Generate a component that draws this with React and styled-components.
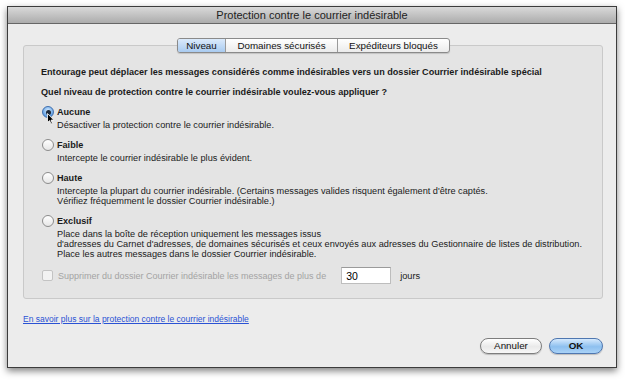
import React from "react";
import styled, { createGlobalStyle } from "styled-components";

const GlobalStyle = createGlobalStyle`
  html, body {
    margin: 0;
    background: #ffffff;
  }
  body {
    font-family: "Liberation Sans", Arial, sans-serif;
    color: #1a1a1a;
  }
  * {
    box-sizing: border-box;
  }
`;

const options = [
  {
    id: "aucune",
    label: "Aucune",
    lines: ["Désactiver la protection contre le courrier indésirable."],
    checked: true,
  },
  {
    id: "faible",
    label: "Faible",
    lines: ["Intercepte le courrier indésirable le plus évident."],
  },
  {
    id: "haute",
    label: "Haute",
    lines: [
      "Intercepte la plupart du courrier indésirable.  (Certains messages valides risquent également d'être captés.",
      "Vérifiez fréquemment le dossier Courrier indésirable.)",
    ],
  },
  {
    id: "exclusif",
    label: "Exclusif",
    lines: [
      "Place dans la boîte de réception uniquement les messages issus",
      "d'adresses du Carnet d'adresses, de domaines sécurisés et ceux envoyés aux adresses du Gestionnaire de listes de distribution.",
      "Place les autres messages dans le dossier Courrier indésirable.",
    ],
  },
];

const tabs = [
  { label: "Niveau", width: 47, active: true },
  { label: "Domaines sécurisés", width: 112 },
  { label: "Expéditeurs bloqués", width: 112 },
];

const App = () => {
  return (
    <Page>
      <GlobalStyle />
      <Window>
        <TitleBar>Protection contre le courrier indésirable</TitleBar>
        <Body>
          <TabBar>
            <Segmented>
              {tabs.map((t) => (
                <Segment key={t.label} $active={t.active} $width={t.width}>
                  {t.label}
                </Segment>
              ))}
            </Segmented>
          </TabBar>
          <Group>
            <Intro>
              Entourage peut déplacer les messages considérés comme indésirables
              vers un dossier Courrier indésirable spécial
            </Intro>
            <Question>
              Quel niveau de protection contre le courrier indésirable
              voulez-vous appliquer ?
            </Question>
            <OptionList>
              {options.map((o) => (
                <Option key={o.id}>
                  <Radio $checked={o.checked}>
                    {o.checked && <Dot />}
                    {o.checked && (
                      <Pointer viewBox="0 0 8 12" width="8" height="12">
                        <path
                          d="M0.5 0.5 L0.5 9.5 L2.6 7.6 L4 11 L5.4 10.4 L4 7.1 L6.8 7.1 Z"
                          fill="#000"
                          stroke="#fff"
                          strokeWidth="0.8"
                        />
                      </Pointer>
                    )}
                  </Radio>
                  <OptionLabel>{o.label}</OptionLabel>
                  <OptionDesc>
                    {o.lines.map((l) => (
                      <div key={l}>{l}</div>
                    ))}
                  </OptionDesc>
                </Option>
              ))}
            </OptionList>
            <DeleteRow>
              <Checkbox />
              <DisabledLabel>
                Supprimer du dossier Courrier indésirable les messages de plus de
              </DisabledLabel>
              <DaysInput defaultValue="30" />
              <Unit>jours</Unit>
            </DeleteRow>
          </Group>
          <HelpLink href="#">
            En savoir plus sur la protection contre le courrier indésirable
          </HelpLink>
          <Buttons>
            <Button>Annuler</Button>
            <Button $primary>OK</Button>
          </Buttons>
        </Body>
      </Window>
    </Page>
  );
};

export default App;

const Page = styled.div`
  width: 625px;
  height: 380px;
  padding: 6px 8px 0 7px;
`;

const Window = styled.div`
  width: 610px;
  height: 362px;
  border: 1px solid #3c3c3c;
  background: #ececec;
  box-shadow: 0 3px 7px rgba(0, 0, 0, 0.5);
  display: flex;
  flex-direction: column;
`;

const TitleBar = styled.div`
  height: 17px;
  flex-shrink: 0;
  background: linear-gradient(#d9d9d9, #acacac);
  border-bottom: 1px solid #666;
  font-size: 11px;
  line-height: 16px;
  text-align: center;
  color: #222;
`;

const Body = styled.div`
  flex: 1;
  display: flex;
  flex-direction: column;
  padding: 14px 13px 0 15px;
`;

const TabBar = styled.div`
  display: flex;
  justify-content: center;
  margin-left: 1px;
  margin-bottom: -8px;
  position: relative;
  z-index: 1;
`;

const Segmented = styled.div`
  display: flex;
  height: 15px;
  border: 1px solid #8a8a8a;
  border-radius: 3px;
  overflow: hidden;
  background: linear-gradient(#ffffff, #ebebeb);
  box-shadow: 0 1px 1px rgba(0, 0, 0, 0.15);
`;

const Segment = styled.div`
  width: ${(p) => p.$width}px;
  font-size: 9.8px;
  line-height: 13px;
  text-align: center;
  color: #111;
  border-left: 1px solid #9a9a9a;
  background: ${(p) =>
    p.$active ? "linear-gradient(#dbeafb, #a9cbf0)" : "transparent"};
  &:first-child {
    border-left: none;
  }
`;

const Group = styled.div`
  border: 1px solid #c9c9c9;
  border-radius: 3px;
  background: #e4e4e4;
  padding: 20px 16px 14px 17px;
`;

const Intro = styled.div`
  font-size: 9.1px;
  font-weight: bold;
  line-height: 12px;
  white-space: nowrap;
`;

const Question = styled(Intro)`
  margin-top: 8px;
`;

const OptionList = styled.div`
  margin-top: 8px;
  display: flex;
  flex-direction: column;
  gap: 9px;
`;

const Option = styled.div`
  display: grid;
  grid-template-columns: 12px 1fr;
  column-gap: 3px;
  padding-left: 1px;
`;

const Radio = styled.span`
  position: relative;
  width: 12px;
  height: 12px;
  border-radius: 50%;
  border: 1px solid ${(p) => (p.$checked ? "#3f6fae" : "#8c8c8c")};
  background: ${(p) =>
    p.$checked
      ? "radial-gradient(circle at 50% 35%, #d7ecff, #5f9ee3 70%)"
      : "linear-gradient(#ffffff, #e6e6e6)"};
  display: flex;
  align-items: center;
  justify-content: center;
`;

const Dot = styled.span`
  width: 5px;
  height: 5px;
  border-radius: 50%;
  background: #1d2a3a;
`;

const Pointer = styled.svg`
  position: absolute;
  left: 4px;
  top: 6px;
`;

const OptionLabel = styled.span`
  font-size: 9.1px;
  font-weight: bold;
  line-height: 12px;
`;

const OptionDesc = styled.div`
  grid-column: 2;
  margin-top: 2px;
  font-size: 9.2px;
  line-height: 10px;
  white-space: nowrap;
`;

const DeleteRow = styled.div`
  margin-top: 8px;
  display: flex;
  align-items: center;
  height: 17px;
  padding-left: 1px;
`;

const Checkbox = styled.span`
  width: 11px;
  height: 11px;
  border: 1px solid #c3c3c3;
  border-radius: 2px;
  background: #f2f2f2;
`;

const DisabledLabel = styled.span`
  margin-left: 5px;
  font-size: 9px;
  color: #a3a3a3;
  white-space: nowrap;
`;

const DaysInput = styled.input`
  margin-left: 15px;
  width: 50px;
  height: 17px;
  border: 1px solid #bdbdbd;
  border-top-color: #9a9a9a;
  background: #fff;
  font-family: inherit;
  font-size: 10.5px;
  padding: 0 4px;
  outline: none;
`;

const Unit = styled.span`
  margin-left: 9px;
  font-size: 9.2px;
`;

const HelpLink = styled.a`
  margin-top: 14px;
  align-self: flex-start;
  font-size: 8.5px;
  line-height: 12px;
  color: #2a52d4;
  text-decoration: underline;
`;

const Buttons = styled.div`
  margin-top: 13px;
  display: flex;
  justify-content: flex-end;
  gap: 7px;
`;

const Button = styled.button`
  width: ${(p) => (p.$primary ? "54px" : "62px")};
  height: 16px;
  border-radius: 8px;
  border: 1px solid ${(p) => (p.$primary ? "#4f77b0" : "#7d7d7d")};
  background: ${(p) =>
    p.$primary
      ? "linear-gradient(#d6eafd, #8ec0ef 55%, #a9d2f7)"
      : "linear-gradient(#ffffff, #e9e9e9 55%, #f7f7f7)"};
  box-shadow: 0 1px 1px rgba(0, 0, 0, 0.2);
  font-family: inherit;
  font-size: 9.8px;
  font-weight: ${(p) => (p.$primary ? "bold" : "normal")};
  line-height: 14px;
  padding: 0;
  color: #111;
`;
